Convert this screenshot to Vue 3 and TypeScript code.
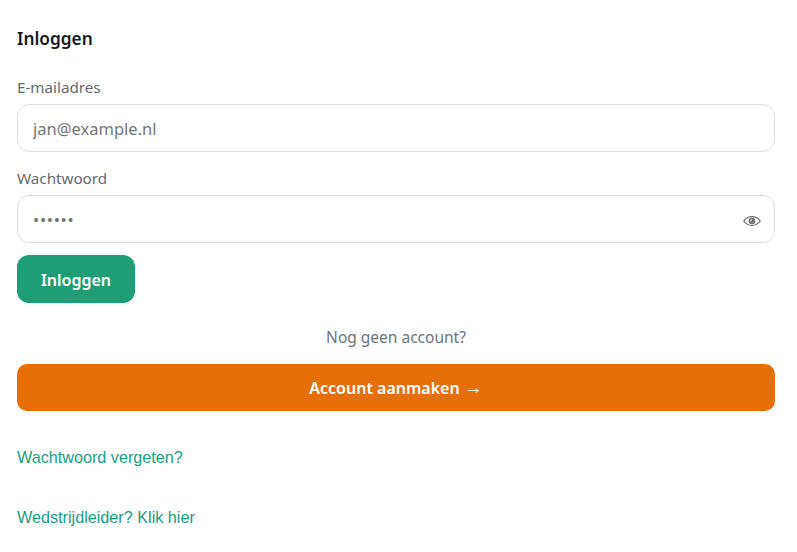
<script setup lang="ts">
import { ref } from 'vue'
const email = ref('')
const password = ref('secret')
</script>

<template>
  <main class="page">
    <h1 class="title">Inloggen</h1>
    <form class="form" @submit.prevent>
      <label class="label" for="email">E-mailadres</label>
      <input id="email" v-model="email" class="input" type="email" placeholder="jan@example.nl" />
      <label class="label second" for="password">Wachtwoord</label>
      <div class="password">
        <input id="password" v-model="password" class="input secret" type="password" />
        <button class="eye" type="button" aria-label="Toon wachtwoord">
          <svg width="18" height="10" viewBox="0 0 18 10" fill="none">
            <path d="M.8 5C3 1.900 5.800.6 9 .6s6 1.300 8.200 4.400C15 8.100 12.200 9.400 9 9.400S3 8.100.8 5Z" stroke="#6b6f72" stroke-width="1.200" />
            <circle cx="9" cy="5" r="3.300" fill="#707478" />
            <circle cx="8.200" cy="4.200" r="1" fill="#d4d4d4" />
          </svg>
        </button>
      </div>
      <button class="primary" type="submit">Inloggen</button>
    </form>
    <p class="hint">Nog geen account?</p>
    <button class="create" type="button">Account aanmaken <span class="arrow">→</span></button>
    <a class="link first" href="#">Wachtwoord vergeten?</a>
    <a class="link" href="#">Wedstrijdleider? Klik hier</a>
  </main>
</template>

<style scoped>
.page {
  display: flex;
  flex-direction: column;
  align-items: stretch;
  box-sizing: border-box;
  width: 797px;
  padding: 27px 22px 0 17px;
  font-family: "Noto Sans", "Open Sans", sans-serif;
  background: #fff;
}
.title {
  margin: 0 0 24px;
  height: 24px;
  font-size: 17.300px;
  line-height: 24px;
  font-weight: 600;
  color: #16181c;
}
.form {
  display: flex;
  flex-direction: column;
  align-items: flex-start;
}
.label {
  height: 24px;
  margin-bottom: 5px;
  font-size: 15.200px;
  line-height: 24px;
  color: #666a70;
}
.second {
  margin-top: 14px;
  margin-bottom: 5px;
}
.password {
  position: relative;
  width: 100%;
}
.input {
  display: block;
  box-sizing: border-box;
  width: 100%;
  height: 48px;
  padding: 0 15px;
  border: 1px solid #e0e0e3;
  border-radius: 12px;
  outline: none;
  font-family: inherit;
  font-size: 16.500px;
  color: #757575;
  background: #fff;
}
.secret {
  letter-spacing: 0.7px;
}
.input::placeholder {
  color: #757575;
  opacity: 1;
}
.eye {
  position: absolute;
  top: 21px;
  right: 14px;
  display: flex;
  padding: 0;
  border: 0;
  background: none;
}
.primary {
  width: 118px;
  height: 48px;
  margin-top: 12px;
  padding: 2px 0 0;
  border: 0;
  border-radius: 12px;
  font-family: inherit;
  font-size: 16px;
  font-weight: 600;
  color: #fff;
  background: #1f9e75;
}
.hint {
  margin: 22px 0 15px;
  height: 24px;
  font-size: 15.500px;
  line-height: 24px;
  text-align: center;
  color: #6b7280;
}
.create {
  display: flex;
  align-items: center;
  justify-content: center;
  gap: 4px;
  width: 100%;
  height: 47px;
  padding: 1px 0 0;
  border: 0;
  border-radius: 10px;
  font-family: inherit;
  font-size: 16px;
  font-weight: 600;
  color: #fff;
  background: #e76f0a;
}
.arrow {
  font-family: "Liberation Sans", sans-serif;
  font-size: 19px;
  line-height: 20px;
  font-weight: 400;
}
.link {
  display: block;
  margin-top: 42px;
  height: 18px;
  font-family: "Liberation Sans", Arial, sans-serif;
  font-size: 16.200px;
  line-height: 18px;
  color: #16a085;
  text-decoration: none;
}
.first {
  margin-top: 37px;
}
</style>
